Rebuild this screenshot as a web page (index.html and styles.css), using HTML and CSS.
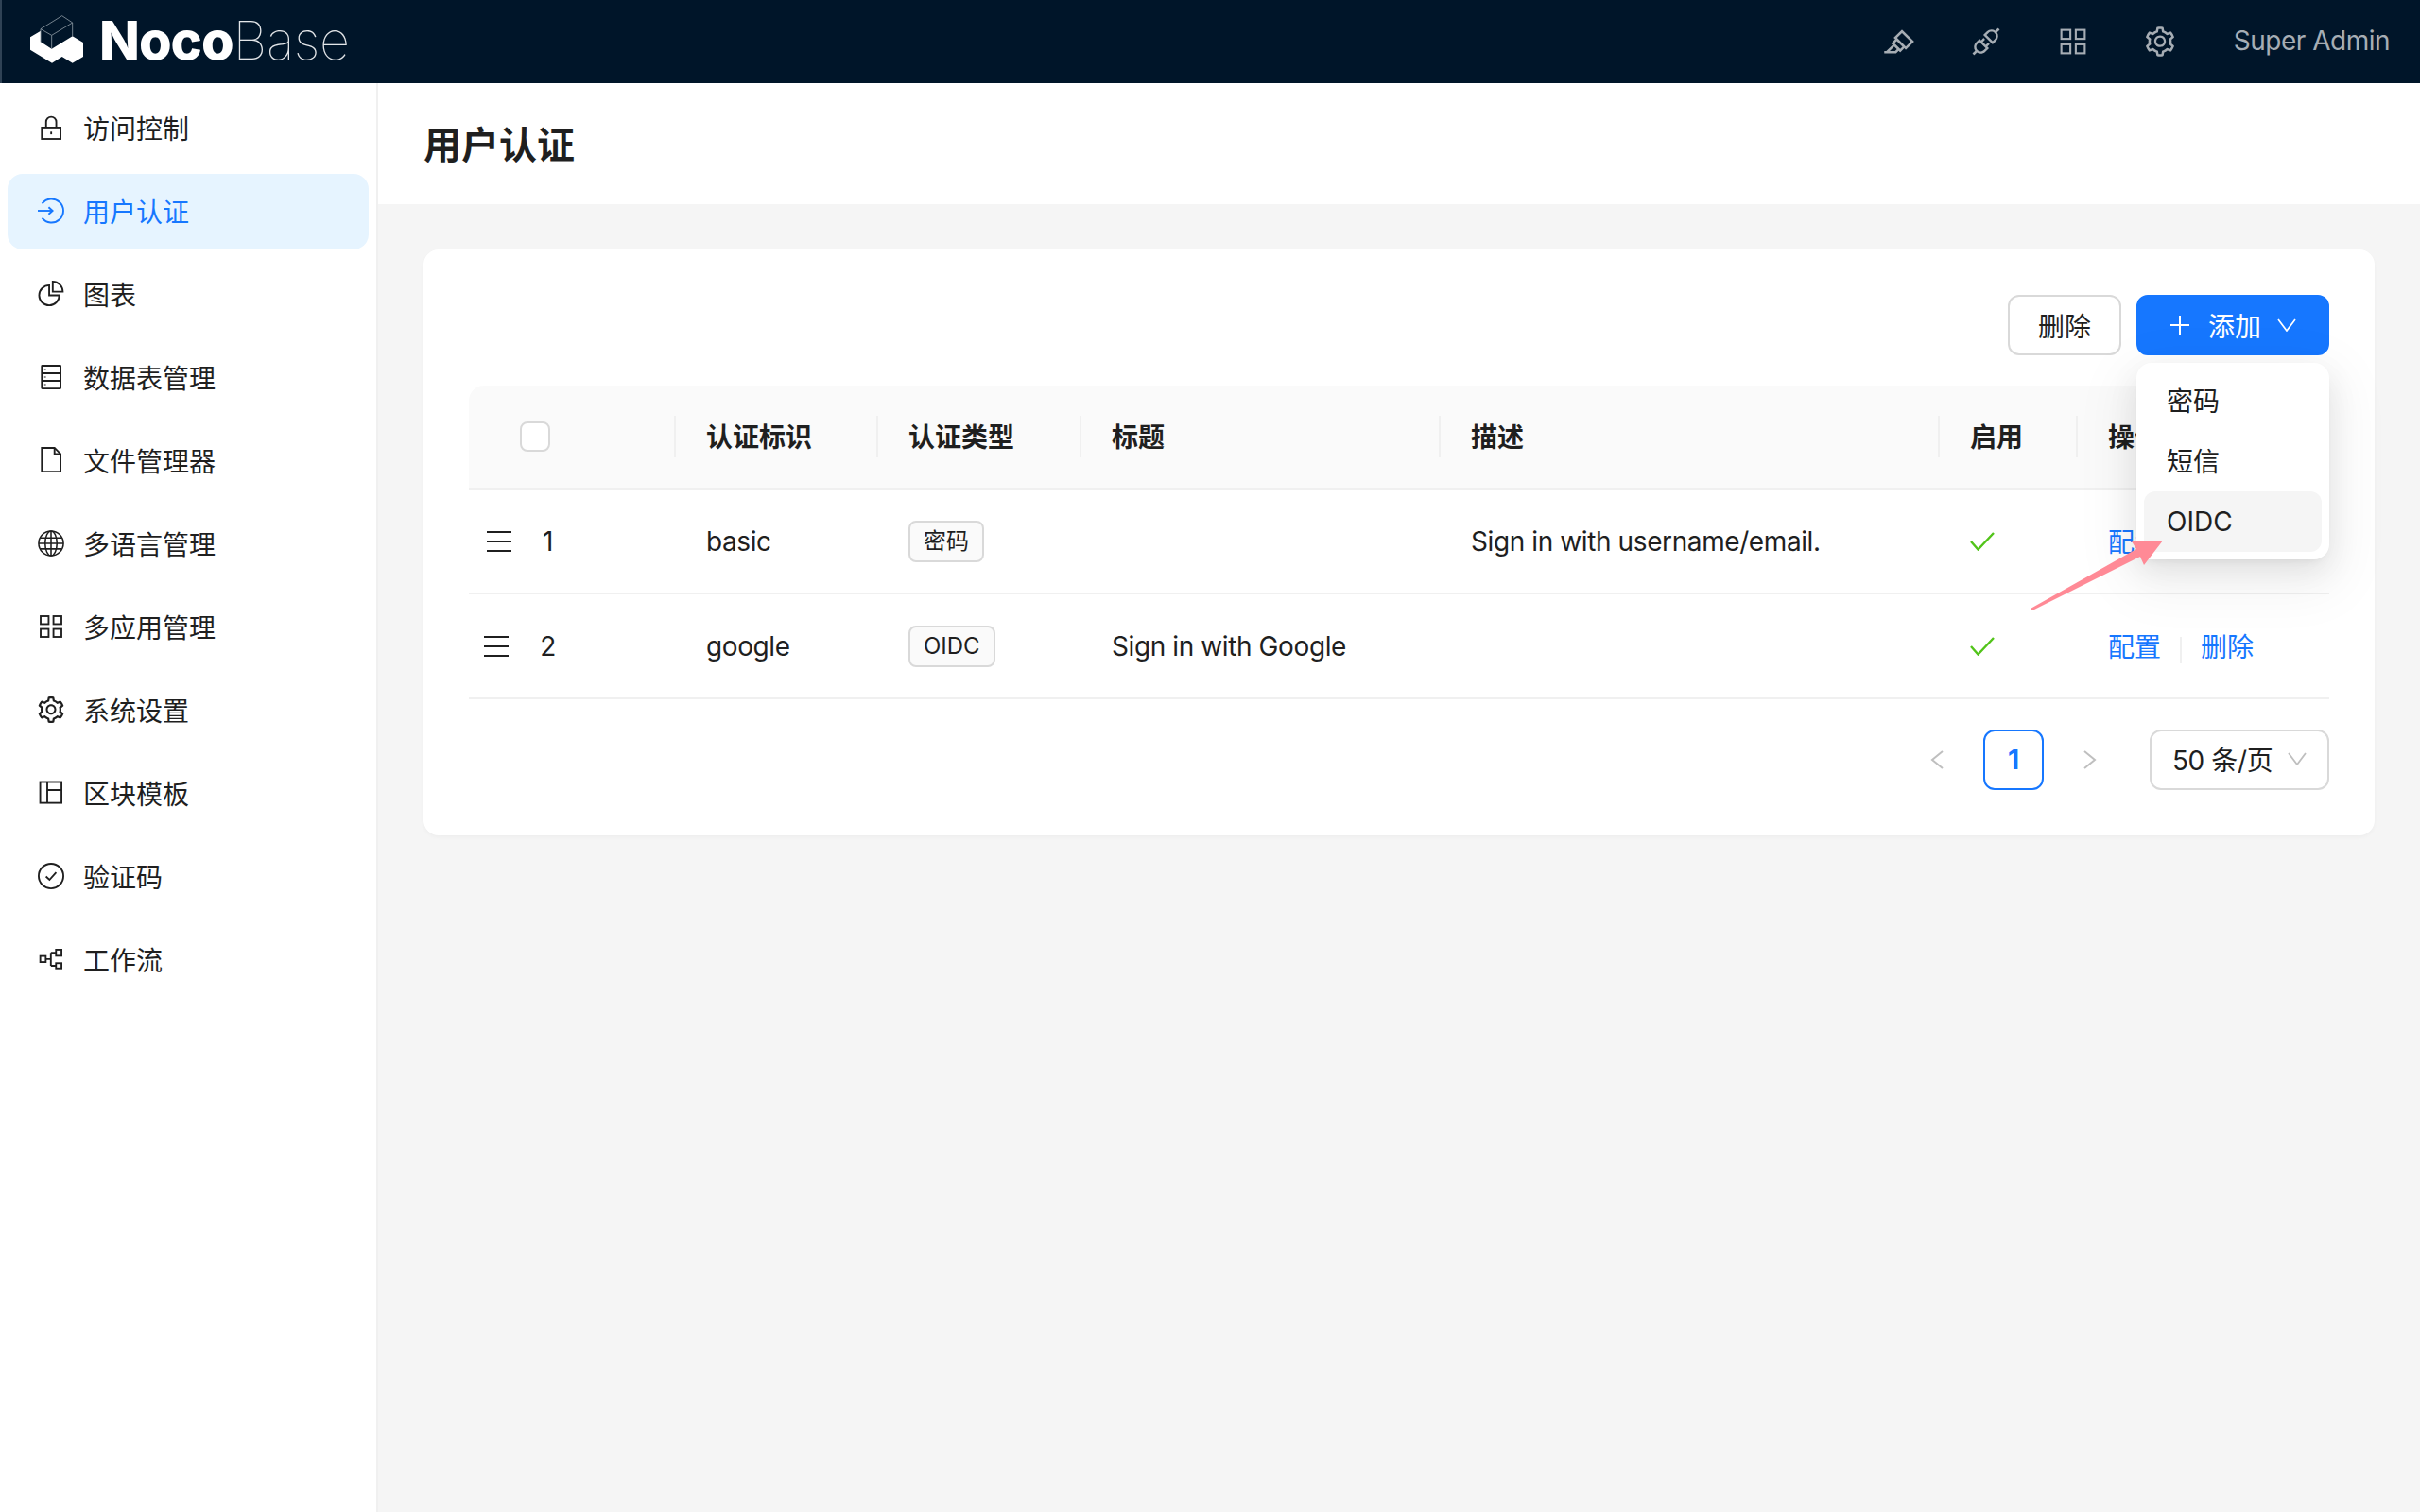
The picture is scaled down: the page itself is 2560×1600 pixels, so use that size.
FILE: index.html
```html
<!DOCTYPE html>
<html lang="zh-CN">
<head>
    <meta charset="UTF-8">
    <meta name="viewport" content="width=device-width, initial-scale=1.0">
    <link rel="stylesheet" href="styles.css">
    <title>NocoBase</title>
</head>
<body>
    <svg class="defs" width="0" height="0">
        <symbol id="i-lock" viewBox="0 0 1024 1024"><g class="ln"><rect x="200" y="510" width="634" height="386"/><path d="M345 510V320a172 172 0 0 1 344 0v190"/><path d="M517 650v90"/></g></symbol>
        <symbol id="i-login" viewBox="0 0 1024 1024"><g class="ln"><path d="M210 270a400 400 0 1 1 0 484"/><path d="M64 512h500"/><path d="M430 390l134 122-134 122"/></g></symbol>
        <symbol id="i-pie" viewBox="0 0 1024 1024"><g class="ln"><path d="M450 220A340 340 0 1 0 790 560H450z"/><path d="M570 94A340 340 0 0 1 910 434H570z"/></g></symbol>
        <symbol id="i-db" viewBox="0 0 1024 1024"><g class="ln"><rect x="200" y="126" width="634" height="772" rx="16"/><path d="M200 383h634M200 640h634"/><path d="M310 240v30M310 497v30M310 754v30"/></g></symbol>
        <symbol id="i-file" viewBox="0 0 1024 1024"><g class="ln"><path d="M200 94h430l204 204v600H200z"/><path d="M630 94v204h204"/></g></symbol>
        <symbol id="i-globe" viewBox="0 0 1024 1024"><g class="ln thin"><circle cx="512" cy="512" r="418"/><ellipse cx="512" cy="512" rx="200" ry="418"/><path d="M512 94v836M94 512h836M145 325h734M145 699h734"/></g></symbol>
        <symbol id="i-apps" viewBox="0 0 1024 1024"><g class="ln"><rect x="160" y="160" width="270" height="270"/><rect x="594" y="160" width="270" height="270"/><rect x="160" y="594" width="270" height="270"/><rect x="594" y="594" width="270" height="270"/></g></symbol>
        <symbol id="i-gear" viewBox="0 0 1024 1024"><path fill="currentColor" d="M924.8 625.7l-65.5-56c3.1-19 4.7-38.4 4.7-57.8s-1.6-38.8-4.7-57.8l65.5-56a32.03 32.03 0 0 0 9.3-35.2l-.9-2.6a443.74 443.74 0 0 0-79.7-137.9l-1.8-2.1a32.12 32.12 0 0 0-35.1-9.5l-81.3 28.9c-30-24.6-63.5-44-99.7-57.6l-15.7-85a32.05 32.05 0 0 0-25.8-25.7l-2.7-.5c-52.1-9.4-106.9-9.4-159 0l-2.7.5a32.05 32.05 0 0 0-25.8 25.7l-15.8 85.4a351.86 351.86 0 0 0-99 57.4l-81.9-29.1a32 32 0 0 0-35.1 9.5l-1.8 2.1a446.02 446.02 0 0 0-79.7 137.9l-.9 2.6c-4.5 12.5-.8 26.5 9.3 35.2l66.3 56.6c-3.1 18.8-4.6 38-4.6 57.1 0 19.2 1.5 38.4 4.6 57.1L99 625.5a32.03 32.03 0 0 0-9.3 35.2l.9 2.6c18.1 50.4 44.9 96.9 79.7 137.9l1.8 2.1a32.12 32.12 0 0 0 35.1 9.5l81.9-29.1c29.8 24.5 63.1 43.9 99 57.4l15.8 85.4a32.05 32.05 0 0 0 25.8 25.7l2.7.5a449.4 449.4 0 0 0 159 0l2.7-.5a32.05 32.05 0 0 0 25.8-25.7l15.7-85a350 350 0 0 0 99.7-57.6l81.3 28.9a32 32 0 0 0 35.1-9.5l1.8-2.1c34.8-41.1 61.6-87.5 79.7-137.9l.9-2.6c4.5-12.3.8-26.3-9.3-35zM788.3 465.9c2.5 15.1 3.8 30.6 3.8 46.1s-1.3 31-3.8 46.1l-6.6 40.1 74.7 63.9a370.03 370.03 0 0 1-42.6 73.6L721 702.8l-31.4 25.8c-23.9 19.6-50.5 35-79.3 45.8l-38.1 14.3-17.9 97a377.5 377.5 0 0 1-85 0l-17.9-97.2-37.8-14.5c-28.5-10.8-55-26.2-78.7-45.7l-31.4-25.9-93.4 33.2c-17-22.9-31.2-47.6-42.6-73.6l75.5-64.5-6.5-40c-2.4-14.9-3.7-30.3-3.7-45.5 0-15.3 1.2-30.6 3.7-45.5l6.5-40-75.5-64.5c11.3-26.1 25.6-50.7 42.6-73.6l93.4 33.2 31.4-25.9c23.7-19.5 50.2-34.9 78.7-45.7l37.9-14.3 17.9-97.2c28.1-3.2 56.8-3.2 85 0l17.9 97 38.1 14.3c28.7 10.8 55.4 26.2 79.3 45.8l31.4 25.8 92.8-32.9c17 22.9 31.2 47.6 42.6 73.6L781.8 426l6.5 39.9zM512 326c-97.2 0-176 78.8-176 176s78.8 176 176 176 176-78.8 176-176-78.8-176-176-176zm79.2 255.2A111.6 111.6 0 0 1 512 614c-29.9 0-58-11.7-79.2-32.8A111.6 111.6 0 0 1 400 502c0-29.9 11.7-58 32.8-79.2C454 401.6 482.1 390 512 390c29.9 0 58 11.6 79.2 32.8A111.6 111.6 0 0 1 624 502c0 29.9-11.7 58-32.8 79.2z"/></symbol>
        <symbol id="i-layout" viewBox="0 0 1024 1024"><g class="ln"><rect x="146" y="144" width="720" height="708"/><path d="M384 144v708M384 416h482"/></g></symbol>
        <symbol id="i-check-circle" viewBox="0 0 1024 1024"><g class="ln"><circle cx="512" cy="512" r="418"/><path d="M340 530l120 110 225-255"/></g></symbol>
        <symbol id="i-flow" viewBox="0 0 1024 1024"><g class="ln"><rect x="148" y="404" width="184" height="206"/><rect x="680" y="190" width="186" height="206"/><rect x="680" y="648" width="186" height="176"/><path d="M332 507h174M506 293v443M506 293h174M506 736h174"/></g></symbol>
        <symbol id="i-brush" viewBox="0 0 1024 1024"><path fill="currentColor" d="M957.6 507.4L603.2 158.2a7.9 7.9 0 0 0-11.2 0L353.3 393.4a8.03 8.03 0 0 0-.1 11.3l.1.1 40 39.4-117.2 115.3a8.03 8.03 0 0 0-.1 11.3l.1.1 39.5 38.9-189.1 187H72.1c-4.4 0-8.1 3.6-8.1 8V860c0 4.4 3.6 8 8 8h344.9c2.1 0 4.1-.8 5.6-2.3l76.1-75.6 40.4 39.8a7.9 7.9 0 0 0 11.2 0l117.1-115.6 40.1 39.5a7.9 7.9 0 0 0 11.2 0l238.7-235.2c3.4-3 3.4-8 .3-11.2zM389.8 796.2H229.6l134.4-133 80.1 78.9-54.3 54.1zm154.8-62.1L373.2 565.2l68.6-67.6 171.4 168.9-68.6 67.6zM713.1 658L450.3 399.1 597.6 254l262.8 259-147.3 145z"/></symbol>
        <symbol id="i-api" viewBox="0 0 1024 1024"><path fill="currentColor" d="M917.7 148.8l-42.4-42.4c-1.6-1.6-3.6-2.3-5.7-2.3s-4.1.8-5.7 2.3l-76.1 76.1a199.27 199.27 0 0 0-112.1-34.3c-51.2 0-102.4 19.5-141.5 58.6L432.3 308.7a8.03 8.03 0 0 0 0 11.3L704 591.7c1.6 1.6 3.6 2.3 5.7 2.3 2 0 4.1-.8 5.7-2.3l101.9-101.9c68.9-69 77-175.7 24.3-253.5l76.1-76.1c3.1-3.2 3.1-8.3 0-11.4zM769.1 441.7l-59.4 59.4-186.8-186.8 59.4-59.4c24.9-24.9 58.1-38.7 93.4-38.7 35.3 0 68.4 13.7 93.4 38.7 24.9 24.9 38.7 58.1 38.7 93.4 0 35.3-13.8 68.4-38.7 93.4zm-190.2 105a8.03 8.03 0 0 0-11.3 0L501 613.3 410.7 523l66.7-66.7c3.1-3.1 3.1-8.2 0-11.3L441 408.6a8.03 8.03 0 0 0-11.3 0L363 475.3l-43-43a7.85 7.85 0 0 0-5.7-2.3c-2 0-4.1.8-5.7 2.3L206.8 534.2c-68.9 69-77 175.7-24.3 253.5l-76.1 76.1a8.03 8.03 0 0 0 0 11.3l42.4 42.4c1.6 1.6 3.6 2.3 5.7 2.3s4.1-.8 5.7-2.3l76.1-76.1c33.7 22.9 72.9 34.3 112.1 34.3 51.2 0 102.4-19.5 141.5-58.6l101.9-101.9c3.1-3.1 3.1-8.2 0-11.3l-43-43 66.7-66.7c3.1-3.1 3.1-8.2 0-11.3l-36.6-36.2zM441.7 769.1a131.32 131.32 0 0 1-93.4 38.7c-35.3 0-68.4-13.7-93.4-38.7a131.32 131.32 0 0 1-38.7-93.4c0-35.3 13.7-68.4 38.7-93.4l59.4-59.4 186.8 186.8-59.4 59.4z"/></symbol>
    </svg>

    <header class="topbar">
        <div class="brand">
            <svg class="brand-mark" width="80" height="64" viewBox="0 6 240 192">
                <path fill="#fff" d="M24 88L57 68v35l35 22 66-40 34 20v45l-34 20-33-20-32 20-69-42z"/>
                <path fill="none" stroke="#8c97a1" stroke-width="2.5" d="M125 20l33 22-66 40-35-20zM158 42v43M92 82v43M57 62v41"/>
            </svg>
            <span class="brand-bold">Noco</span><span class="brand-thin">Base</span>
        </div>
        <div class="topbar-right">
            <svg class="top-icon"><use href="#i-brush"/></svg>
            <svg class="top-icon"><use href="#i-api"/></svg>
            <svg class="top-icon"><use href="#i-apps"/></svg>
            <svg class="top-icon"><use href="#i-gear"/></svg>
            <span class="user-name">Super Admin</span>
        </div>
    </header>

    <div class="layout">
        <nav class="sidebar">
            <a class="nav-item"><svg class="nav-icon"><use href="#i-lock"/></svg>访问控制</a>
            <a class="nav-item active"><svg class="nav-icon"><use href="#i-login"/></svg>用户认证</a>
            <a class="nav-item"><svg class="nav-icon"><use href="#i-pie"/></svg>图表</a>
            <a class="nav-item"><svg class="nav-icon"><use href="#i-db"/></svg>数据表管理</a>
            <a class="nav-item"><svg class="nav-icon"><use href="#i-file"/></svg>文件管理器</a>
            <a class="nav-item"><svg class="nav-icon"><use href="#i-globe"/></svg>多语言管理</a>
            <a class="nav-item"><svg class="nav-icon"><use href="#i-apps"/></svg>多应用管理</a>
            <a class="nav-item"><svg class="nav-icon"><use href="#i-gear"/></svg>系统设置</a>
            <a class="nav-item"><svg class="nav-icon"><use href="#i-layout"/></svg>区块模板</a>
            <a class="nav-item"><svg class="nav-icon"><use href="#i-check-circle"/></svg>验证码</a>
            <a class="nav-item"><svg class="nav-icon"><use href="#i-flow"/></svg>工作流</a>
        </nav>

        <main class="main">
            <div class="page-header"><h1 class="page-title">用户认证</h1></div>
            <div class="content">
                <section class="card">
                    <div class="toolbar">
                        <button class="btn">删除</button>
                        <div class="add-wrap">
                            <button class="btn btn-primary">
                                <svg class="btn-icon" viewBox="0 0 22 22"><path d="M11 1v20M1 11h20"/></svg>
                                <span>添加</span>
                                <svg class="btn-chevron" viewBox="0 0 20 14"><path d="M1 1l9 12 9-12"/></svg>
                            </button>
                            <ul class="dropdown">
                                <li class="dropdown-item cjk">密码</li>
                                <li class="dropdown-item cjk">短信</li>
                                <li class="dropdown-item hover">OIDC</li>
                            </ul>
                        </div>
                    </div>

                    <table class="table">
                        <colgroup>
                            <col class="col-select"><col class="col-name"><col class="col-type"><col class="col-title"><col class="col-desc"><col class="col-on"><col class="col-act">
                        </colgroup>
                        <thead>
                            <tr>
                                <th><span class="checkbox"></span></th>
                                <th>认证标识</th>
                                <th>认证类型</th>
                                <th>标题</th>
                                <th>描述</th>
                                <th>启用</th>
                                <th>操作</th>
                            </tr>
                        </thead>
                        <tbody>
                            <tr>
                                <td><div class="row-head"><span class="drag"></span><span class="row-no">1</span></div></td>
                                <td>basic</td>
                                <td><span class="tag">密码</span></td>
                                <td></td>
                                <td>Sign in with username/email.</td>
                                <td><svg class="check" viewBox="0 0 26 20"><path d="M1 10l7.5 8.5L25 1"/></svg></td>
                                <td><a class="link">配置</a><i class="link-sep"></i><a class="link">删除</a></td>
                            </tr>
                            <tr>
                                <td><div class="row-head"><span class="drag"></span><span class="row-no">2</span></div></td>
                                <td>google</td>
                                <td><span class="tag">OIDC</span></td>
                                <td>Sign in with Google</td>
                                <td></td>
                                <td><svg class="check" viewBox="0 0 26 20"><path d="M1 10l7.5 8.5L25 1"/></svg></td>
                                <td><a class="link">配置</a><i class="link-sep"></i><a class="link">删除</a></td>
                            </tr>
                        </tbody>
                    </table>

                    <div class="pager">
                        <svg class="pager-arrow" viewBox="0 0 14 20"><path d="M13 1L2 10l11 9"/></svg>
                        <span class="page-num">1</span>
                        <svg class="pager-arrow" viewBox="0 0 14 20"><path d="M1 1l11 9-11 9"/></svg>
                        <div class="page-size">
                            <span>50 条/页</span>
                            <svg class="size-chevron" viewBox="0 0 20 14"><path d="M1 1l9 12 9-12"/></svg>
                        </div>
                    </div>
                </section>
            </div>
        </main>
    </div>

    <svg class="callout" width="160" height="92" viewBox="2140 560 160 92">
        <path fill="#ff8a96" d="M2148 644L2260 581 2255 573 2288 572 2268 598 2264 589 2150 646z"/>
    </svg>
</body>
</html>
```

FILE: styles.css
```css
* {
    box-sizing: border-box;
}

html, body {
    margin: 0;
    padding: 0;
}

body {
    position: relative;
    min-height: 1600px;
    overflow: hidden;
    font-family: Inter, "Noto Sans CJK SC", sans-serif;
    font-size: 28px;
    color: #1f1f1f;
    background-color: #fff;
}

.defs {
    position: absolute;
}

.ln {
    fill: none;
    stroke: currentColor;
    stroke-width: 60;
}

.ln.thin {
    stroke-width: 50;
}

/* top bar */
.topbar {
    display: flex;
    align-items: center;
    justify-content: space-between;
    height: 88px;
    padding: 0 32px 0 22px;
    background-color: #001529;
    border-left: 2px solid #2f4255;
}

.brand {
    display: flex;
    align-items: center;
    color: #fff;
    font-size: 56px;
    line-height: 1;
}

.brand-mark {
    margin-right: 1px;
}

.brand-bold {
    padding-bottom: 3px;
    font-weight: 800;
    letter-spacing: -1px;
}

.brand-thin {
    padding-bottom: 3px;
    font-weight: 100;
    color: #e3e6e9;
    letter-spacing: -0.5px;
}

.topbar-right {
    display: flex;
    align-items: center;
    color: #a6adb4;
}

.top-icon {
    width: 36px;
    height: 36px;
    margin-right: 56px;
}

.user-name {
    margin-left: 4px;
    padding-bottom: 3px;
    letter-spacing: -0.5px;
}

/* sidebar */
.layout {
    display: flex;
    height: 1512px;
}

.sidebar {
    display: flex;
    flex-direction: column;
    gap: 8px;
    flex: none;
    width: 400px;
    padding: 8px 8px 0;
    border-right: 2px solid #f0f0f0;
}

.nav-item {
    display: flex;
    align-items: center;
    gap: 18px;
    height: 80px;
    padding-left: 30px;
    padding-bottom: 2px;
    border-radius: 16px;
}

.nav-item.active {
    color: #1677ff;
    background-color: #e6f4ff;
}

.nav-icon {
    flex: none;
    width: 32px;
    height: 32px;
}

/* main area */
.main {
    flex: 1;
    background-color: #f5f5f5;
}

.page-header {
    display: flex;
    align-items: center;
    height: 128px;
    padding: 0 48px 2px;
    background-color: #fff;
}

.page-title {
    margin: 0;
    font-size: 40px;
    font-weight: 600;
}

.content {
    padding: 48px;
}

.card {
    padding: 48px;
    background-color: #fff;
    border-radius: 16px;
    box-shadow: 0 2px 4px rgba(0, 0, 0, 0.03);
}

.toolbar {
    display: flex;
    justify-content: flex-end;
    gap: 16px;
    margin-bottom: 32px;
}

.btn {
    display: flex;
    align-items: center;
    justify-content: center;
    width: 120px;
    height: 64px;
    font: inherit;
    color: inherit;
    background-color: #fff;
    border: 2px solid #d9d9d9;
    border-radius: 12px;
}

.btn-primary {
    justify-content: flex-start;
    gap: 19px;
    width: 204px;
    padding: 0 0 0 33px;
    color: #fff;
    background-color: #1677ff;
    border-color: #1677ff;
}

.btn-icon {
    width: 22px;
    height: 22px;
    fill: none;
    stroke: currentColor;
    stroke-width: 2;
}

.btn-chevron {
    width: 20px;
    height: 14px;
    margin-left: -2px;
    fill: none;
    stroke: currentColor;
    stroke-width: 1.7;
}

.add-wrap {
    position: relative;
}

.dropdown {
    position: absolute;
    top: 72px;
    left: 0;
    z-index: 5;
    width: 204px;
    margin: 0;
    padding: 8px;
    list-style: none;
    background-color: #fff;
    border-radius: 16px;
    box-shadow: 0 12px 32px 0 rgba(0, 0, 0, 0.08), 0 6px 12px -8px rgba(0, 0, 0, 0.12), 0 18px 56px 16px rgba(0, 0, 0, 0.05);
}

.dropdown-item {
    display: flex;
    align-items: center;
    height: 64px;
    padding-left: 24px;
    border-radius: 12px;
}

.dropdown-item.cjk {
    padding-bottom: 2px;
}

.dropdown-item.hover {
    background-color: #f5f5f5;
}

/* table */
.table {
    width: 100%;
    table-layout: fixed;
    border-collapse: separate;
    border-spacing: 0;
}

.col-select { width: 219px; }
.col-name { width: 214px; }
.col-type { width: 215px; }
.col-title { width: 380px; }
.col-desc { width: 528px; }
.col-on { width: 146px; }

.table th {
    position: relative;
    height: 110px;
    padding: 0 32px 2px;
    font-weight: 600;
    text-align: left;
    background-color: #fafafa;
    border-bottom: 2px solid #f0f0f0;
}

.table th:first-child {
    border-top-left-radius: 16px;
}

.table th:last-child {
    border-top-right-radius: 16px;
}

.table th:not(:last-child)::after {
    content: "";
    position: absolute;
    top: 32px;
    right: 0;
    width: 2px;
    height: 44px;
    background-color: #f0f0f0;
}

.table td {
    height: 111px;
    padding: 0 32px;
    letter-spacing: -0.4px;
    white-space: nowrap;
    border-bottom: 2px solid #f0f0f0;
}

.table th:first-child,
.table td:first-child {
    padding: 0;
}

.checkbox {
    display: block;
    width: 32px;
    height: 32px;
    margin-left: 54px;
    background-color: #fff;
    border: 2px solid #d9d9d9;
    border-radius: 8px;
}

.row-head {
    display: flex;
    align-items: center;
    justify-content: center;
    gap: 33px;
    width: 108px;
}

.drag {
    width: 26px;
    height: 22px;
    border-top: 2px solid #1f1f1f;
    border-bottom: 2px solid #1f1f1f;
    background: linear-gradient(#1f1f1f, #1f1f1f) center / 100% 2px no-repeat;
}

.tag {
    display: inline-block;
    padding: 0 14px;
    font-size: 24px;
    line-height: 40px;
    letter-spacing: 0;
    background-color: #fafafa;
    border: 2px solid #d9d9d9;
    border-radius: 8px;
}

.check {
    display: block;
    width: 26px;
    height: 20px;
    fill: none;
    stroke: #52c41a;
    stroke-width: 2.4;
}

.link {
    position: relative;
    top: -1px;
    color: #1677ff;
    letter-spacing: 0;
}

.link-sep {
    display: inline-block;
    width: 2px;
    height: 28px;
    margin: 0 20px 0 20px;
    vertical-align: middle;
    background-color: #f0f0f0;
}

/* pagination */
.pager {
    display: flex;
    align-items: center;
    justify-content: flex-end;
    margin-top: 32px;
}

.pager-arrow {
    width: 14px;
    height: 20px;
    fill: none;
    stroke: #bfbfbf;
    stroke-width: 2;
}

.page-num {
    display: flex;
    align-items: center;
    justify-content: center;
    width: 64px;
    height: 64px;
    margin: 0 42px;
    font-weight: 700;
    color: #1677ff;
    border: 2px solid #1677ff;
    border-radius: 12px;
}

.page-size {
    display: flex;
    align-items: center;
    justify-content: space-between;
    width: 190px;
    height: 64px;
    margin-left: 56px;
    padding: 0 22px 2px 22px;
    letter-spacing: -0.4px;
    border: 2px solid #d9d9d9;
    border-radius: 12px;
}

.size-chevron {
    width: 20px;
    height: 14px;
    fill: none;
    stroke: #bfbfbf;
    stroke-width: 1.8;
}

/* annotation arrow on top of the screenshot */
.callout {
    position: absolute;
    top: 560px;
    left: 2140px;
    z-index: 10;
}
```
